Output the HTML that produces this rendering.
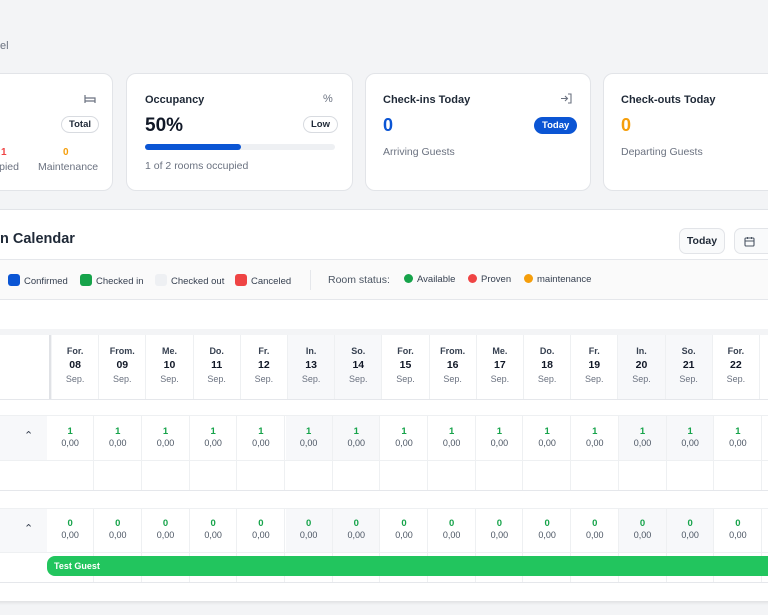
<!DOCTYPE html>
<html><head><meta charset="utf-8"><style>
*{box-sizing:border-box;margin:0;padding:0}
body{width:768px;height:615px;overflow:hidden;background:#f3f4f6;font-family:"Liberation Sans",Arial,sans-serif;position:relative;color:#111827}
.a{position:absolute}
.card{position:absolute;top:73px;height:118px;background:#fff;border:1px solid #e2e4e8;border-radius:10px}
.t{font-size:11px;font-weight:bold;color:#1f2937}
.s{font-size:11px;color:#6b7280}
.pill{position:absolute;font-size:9.5px;font-weight:bold;border:1px solid #d8dbe0;border-radius:10px;padding:2px 7px;background:#fff;color:#1f2937}
.leg{font-size:9.5px;color:#374151}
.sq{display:inline-block;width:12px;height:12px;border-radius:3px;vertical-align:-2px;margin-right:4px}
.dot{display:inline-block;width:9px;height:9px;border-radius:50%;vertical-align:-1px;margin-right:4px}
.col{position:absolute;width:47.2px;text-align:center;border-right:1px solid #eef0f2}
.wk{background:#f7f8fa}
</style></head><body>
<div class="a s" style="left:0;top:40px;font-size:11px">el</div>

<div class="card" style="left:-20px;width:133px">
 <svg class="a" style="left:103px;top:20px" width="12" height="10" viewBox="0 0 12 10" fill="none" stroke="#6b7280" stroke-width="1.2"><path d="M1 1v8M1 4h10v5M1 7h10"/></svg>
 <div class="pill" style="left:80px;top:42px">Total</div>
 <div class="a" style="left:20px;top:73px;font-size:10px;font-weight:bold;color:#ef4444">1</div>
 <div class="a s" style="left:0;top:87px;font-size:10.5px;width:38px;text-align:right">upied</div>
 <div class="a" style="left:82px;top:73px;font-size:10px;font-weight:bold;color:#f59e0b">0</div>
 <div class="a s" style="left:57px;top:87px;font-size:10.5px">Maintenance</div>
</div>

<div class="card" style="left:126px;width:227px">
 <div class="a t" style="left:18px;top:20px">Occupancy</div>
 <div class="a s" style="left:196px;top:19px;font-size:11px">%</div>
 <div class="a" style="left:18px;top:41px;font-size:19px;font-weight:bold">50%</div>
 <div class="pill" style="left:176px;top:42px">Low</div>
 <div class="a" style="left:18px;top:70px;width:190px;height:6px;background:#eef0f3;border-radius:3px"><div style="width:96px;height:6px;background:#0b55d4;border-radius:3px"></div></div>
 <div class="a s" style="left:18px;top:86px;font-size:10.5px">1 of 2 rooms occupied</div>
</div>

<div class="card" style="left:365px;width:226px">
 <div class="a t" style="left:17px;top:20px">Check-ins Today</div>
 <svg class="a" style="left:194px;top:19px" width="12" height="11" viewBox="0 0 12 11" fill="none" stroke="#6b7280" stroke-width="1.1"><path d="M1 5.5h6M5 3l2.5 2.5L5 8M8 1h3v9H8"/></svg>
 <div class="a" style="left:17px;top:41px;font-size:18px;font-weight:bold;color:#0b55d4">0</div>
 <div class="a" style="left:168px;top:43px;font-size:9.5px;font-weight:bold;color:#fff;background:#0b55d4;border-radius:9px;padding:3px 8px">Today</div>
 <div class="a s" style="left:17px;top:72px;font-size:10.5px">Arriving Guests</div>
</div>

<div class="card" style="left:603px;width:200px">
 <div class="a t" style="left:17px;top:20px">Check-outs Today</div>
 <div class="a" style="left:17px;top:41px;font-size:18px;font-weight:bold;color:#f59e0b">0</div>
 <div class="a s" style="left:17px;top:72px;font-size:10.5px">Departing Guests</div>
</div>

<div class="a" style="left:-10px;top:209px;width:790px;height:392px;background:#fff;border-top:1px solid #e2e4e8;box-shadow:0 2px 3px rgba(0,0,0,.08)"></div>
<div class="a" style="left:0;top:231px;font-size:14.5px;font-weight:bold;color:#1f2937">n Calendar</div>
<div class="a" style="left:679px;top:228px;width:46px;height:26px;border:1px solid #e2e4e8;border-radius:7px;background:#f9fafb;font-size:10.5px;font-weight:bold;text-align:center;line-height:24px;color:#1f2937">Today</div>
<div class="a" style="left:734px;top:228px;width:50px;height:26px;border:1px solid #e2e4e8;border-radius:7px;background:#f9fafb"><svg style="position:absolute;left:9px;top:7px" width="11" height="11" viewBox="0 0 11 11" fill="none" stroke="#4b5563" stroke-width="1.1"><rect x="1" y="2" width="9" height="8" rx="1"/><path d="M1 5h9M3.5 1v2M7.5 1v2"/></svg></div>

<div class="a" style="left:0;top:259px;width:768px;height:41px;background:#fafafa;border-top:1px solid #e5e7eb;border-bottom:1px solid #e5e7eb"></div>
<div class="a leg" style="left:8px;top:274px"><span class="sq" style="background:#0b55d4"></span>Confirmed</div>
<div class="a leg" style="left:80px;top:274px"><span class="sq" style="background:#16a34a"></span>Checked in</div>
<div class="a leg" style="left:155px;top:274px"><span class="sq" style="background:#eef0f3"></span>Checked out</div>
<div class="a leg" style="left:235px;top:274px"><span class="sq" style="background:#ef4444"></span>Canceled</div>
<div class="a" style="left:310px;top:270px;width:1px;height:20px;background:#e5e7eb"></div>
<div class="a leg" style="left:328px;top:274px;font-size:10.5px;color:#4b5563">Room status:</div>
<div class="a leg" style="left:404px;top:274px"><span class="dot" style="background:#16a34a"></span>Available</div>
<div class="a leg" style="left:468px;top:274px"><span class="dot" style="background:#ef4444"></span>Proven</div>
<div class="a leg" style="left:524px;top:274px"><span class="dot" style="background:#f59e0b"></span>maintenance</div>

<div class="a" style="left:0;top:329px;width:768px;height:71px;background:#f3f4f6;border-bottom:1px solid #e5e7eb"></div>
<div class="a" style="left:0;top:335px;width:51px;height:64px;background:#fff;border-right:2px solid #e0e2e6"></div>
<div id="hdr"></div>

<div class="a" style="left:0;top:415px;width:768px;height:76px;border-top:1px solid #eef0f2;border-bottom:1px solid #e5e7eb"></div>
<div class="a" style="left:0;top:416px;width:47px;height:44px;background:#f7f8fa"></div>
<div class="a" style="left:0;top:460px;width:768px;height:1px;background:#eef0f2"></div>
<div class="a" style="left:24px;top:429px;font-size:11px;color:#374151">&#8963;</div>

<div class="a" style="left:0;top:508px;width:768px;height:75px;border-top:1px solid #eef0f2;border-bottom:1px solid #e5e7eb"></div>
<div class="a" style="left:0;top:509px;width:47px;height:43px;background:#f7f8fa"></div>
<div class="a" style="left:0;top:552px;width:768px;height:1px;background:#eef0f2"></div>
<div class="a" style="left:24px;top:522px;font-size:11px;color:#374151">&#8963;</div>
<div id="rows"></div>
<div class="a" style="left:47px;top:556px;width:730px;height:20px;background:#22c55e;border-radius:8px;color:#fff;font-size:9px;font-weight:bold;line-height:20px;padding-left:7px">Test Guest</div>

<script>
var d=["For.","From.","Me.","Do.","Fr.","In.","So.","For.","From.","Me.","Do.","Fr.","In.","So.","For.","From."];
var h="",r="";
for(var i=0;i<16;i++){
 var x=52+i*47.2, w=(i%7==5||i%7==6)?" wk":"";
 var n=8+i; n=n<10?"0"+n:n;
 h+='<div class="col'+w+'" style="left:'+x+'px;top:335px;height:64px;background:'+(w?'#f7f8fa':'#fff')+'"><div style="font-size:9px;font-weight:bold;color:#374151;margin-top:11px">'+d[i]+'</div><div style="font-size:10.5px;font-weight:bold;margin-top:3px">'+n+'</div><div style="font-size:9px;color:#6b7280;margin-top:3px">Sep.</div></div>';
 var xr=47+i*47.7;
 r+='<div class="col'+w+'" style="left:'+xr+'px;top:416px;height:44px"><div style="font-size:9.5px;font-weight:bold;color:#16a34a;margin-top:10px">1</div><div style="font-size:9px;color:#4b5563;margin-top:1px">0,00</div></div>';
 r+='<div class="col" style="left:'+xr+'px;top:461px;height:29px"></div>';
 r+='<div class="col'+w+'" style="left:'+xr+'px;top:509px;height:43px"><div style="font-size:9.5px;font-weight:bold;color:#16a34a;margin-top:9px">0</div><div style="font-size:9px;color:#4b5563;margin-top:1px">0,00</div></div>';
 r+='<div class="col" style="left:'+xr+'px;top:553px;height:29px"></div>';
}
document.getElementById("hdr").outerHTML=h;
document.getElementById("rows").outerHTML=r;
</script>
</body></html>
